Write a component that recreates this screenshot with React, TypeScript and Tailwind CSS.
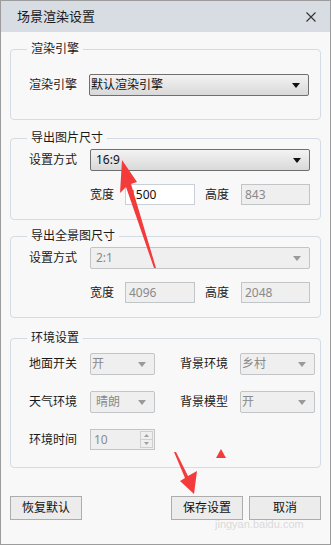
import React from "react";

const font = { fontFamily: '"Noto Sans", "Noto Sans CJK SC", sans-serif' };

function Caret({ disabled }: { disabled?: boolean }) {
  return (
    <svg width="8" height="5" viewBox="0 0 8 5" className="shrink-0">
      <path d="M0 0h8L4 5z" fill={disabled ? "#9a9a9a" : "#111"} />
    </svg>
  );
}

function Select({ value, disabled, className, textClass }: { value: string; disabled?: boolean; className: string; textClass?: string }) {
  return (
    <div
      className={
        "flex h-[22px] items-center justify-between rounded-[2px] border pr-[8px] text-[12px] leading-none " +
        (disabled
          ? "border-[#c2c5c8] bg-[#efefef] text-[#8a8a8a] "
          : "border-[#6f6f6f] bg-gradient-to-b from-[#f3f3f3] to-[#d9d9d9] text-[#111] ") +
        className
      }
    >
      <span className={textClass ?? "pl-[5px]"}>{value}</span>
      <Caret disabled={disabled} />
    </div>
  );
}

function Field({ value, disabled, className }: { value: string; disabled?: boolean; className: string }) {
  return (
    <div
      className={
        "flex h-[21px] items-center border pl-[3px] text-[12px] leading-none " +
        (disabled ? "border-[#c2c5c8] bg-[#efefef] text-[#8a8a8a] " : "border-[#c9d0d8] bg-white text-[#111] ") +
        className
      }
    >
      {value}
    </div>
  );
}

function Group({ title, children, className }: { title: string; children: React.ReactNode; className: string }) {
  return (
    <fieldset className={"mx-[9px] rounded-[4px] border border-[#d3dbe4] " + className}>
      <legend className="ml-[16px] px-[4px] text-[12px] leading-[16px] text-[#1a1a1a]">{title}</legend>
      {children}
    </fieldset>
  );
}

function Label({ children, className }: { children: React.ReactNode; className?: string }) {
  return <span className={"text-[12px] leading-none text-[#1a1a1a] " + (className ?? "")}>{children}</span>;
}

function Button({ children, className }: { children: React.ReactNode; className?: string }) {
  return (
    <div
      className={
        "flex h-[24px] w-[72px] items-center justify-center border border-[#adadad] bg-[#ececec] text-[12px] text-[#111] " +
        (className ?? "")
      }
    >
      {children}
    </div>
  );
}

export default function App() {
  return (
    <div style={font} className="relative h-[545px] w-[331px] overflow-hidden border border-[#9c9c9c] bg-[#f8f8f8]">
      <div className="flex h-[31px] items-center justify-between bg-[#d8dce3] pl-[16px] pr-[14px]">
        <span className="text-[13px] text-[#1a1a1a]">场景渲染设置</span>
        <svg width="10" height="10" viewBox="0 0 10 10">
          <path d="M0.5 0.5l9 9M9.5 0.5l-9 9" stroke="#333" strokeWidth="1.1" />
        </svg>
      </div>

      <Group title="渲染引擎" className="mt-[9px]">
        <div className="flex items-center pb-[23px] pl-[18px] pt-[17px]">
          <Label className="w-[60px]">渲染引擎</Label>
          <Select value="默认渲染引擎" className="w-[220px]" textClass="pl-[1px]" />
        </div>
      </Group>

      <Group title="导出图片尺寸" className="mt-[10px]">
        <div className="flex flex-col gap-[13px] pb-[14px] pl-[18px] pt-[3px]">
          <div className="flex items-center">
            <Label className="w-[61px]">设置方式</Label>
            <Select value="16:9" className="w-[220px]" />
          </div>
          <div className="flex items-center pl-[61px]">
            <Label className="w-[35px]">宽度</Label>
            <Field value="1500" className="w-[70px]" />
            <Label className="ml-[10px] w-[36px]">高度</Label>
            <Field value="843" disabled className="w-[69px]" />
          </div>
        </div>
      </Group>

      <Group title="导出全景图尺寸" className="mt-[8px]">
        <div className="flex flex-col gap-[13px] pb-[14px] pl-[18px] pt-[3px]">
          <div className="flex items-center">
            <Label className="w-[61px]">设置方式</Label>
            <Select value="2:1" disabled className="w-[220px]" />
          </div>
          <div className="flex items-center pl-[61px]">
            <Label className="w-[35px]">宽度</Label>
            <Field value="4096" disabled className="w-[70px]" />
            <Label className="ml-[10px] w-[36px]">高度</Label>
            <Field value="2048" disabled className="w-[69px]" />
          </div>
        </div>
      </Group>

      <Group title="环境设置" className="mt-[12px]">
        <div className="flex flex-col gap-[16px] pb-[17px] pl-[18px] pt-[7px]">
          <div className="flex items-center">
            <Label className="w-[61px]">地面开关</Label>
            <Select value="开" disabled className="h-[21px] w-[65px]" textClass="pl-[1px]" />
            <Label className="ml-[25px] w-[60px]">背景环境</Label>
            <Select value="乡村" disabled className="h-[21px] w-[75px]" textClass="pl-[1px]" />
          </div>
          <div className="flex items-center">
            <Label className="w-[61px]">天气环境</Label>
            <Select value="晴朗" disabled className="h-[21px] w-[65px]" />
            <Label className="ml-[25px] w-[60px]">背景模型</Label>
            <Select value="开" disabled className="h-[21px] w-[75px]" textClass="pl-[1px]" />
          </div>
          <div className="flex items-center">
            <Label className="w-[61px]">环境时间</Label>
            <div className="flex h-[21px] w-[65px] items-center justify-between border border-[#c2c5c8] bg-[#efefef] pl-[3px] pr-[1px] text-[12px] leading-none text-[#8a8a8a]">
              <span>10</span>
              <div className="flex h-[17px] w-[13px] flex-col border border-[#cfcfcf]">
                <div className="flex flex-1 items-center justify-center border-b border-[#cfcfcf]">
                  <svg width="5" height="3" viewBox="0 0 5 3"><path d="M0 3h5L2.5 0z" fill="#a0a0a0" /></svg>
                </div>
                <div className="flex flex-1 items-center justify-center">
                  <svg width="5" height="3" viewBox="0 0 5 3"><path d="M0 0h5L2.5 3z" fill="#a0a0a0" /></svg>
                </div>
              </div>
            </div>
          </div>
        </div>
      </Group>

      <div className="mt-[28px] flex items-center px-[9px]">
        <Button>恢复默认</Button>
        <Button className="ml-auto">保存设置</Button>
        <Button className="ml-[6px]">取消</Button>
      </div>

      <span
        className="pointer-events-none absolute left-[214px] top-[518px] text-[11px] leading-none text-[#dadada]"
        style={{ fontFamily: '"Liberation Sans", sans-serif' }}
      >
        jingyan.baidu.com
      </span>

      <svg className="pointer-events-none absolute left-[-1px] top-[-1px]" width="331" height="545" viewBox="0 0 331 545">
        <polygon points="122,160 137,182 131,184 156,268 154,268 126,187 120,193" fill="#f43b3b" />
        <polygon points="174,452 176,452 188,476 197,471 194,494 180,481 185,478" fill="#f43b3b" />
        <polygon points="221,449 226,458 216,458" fill="#f43b3b" />
      </svg>
    </div>
  );
}
